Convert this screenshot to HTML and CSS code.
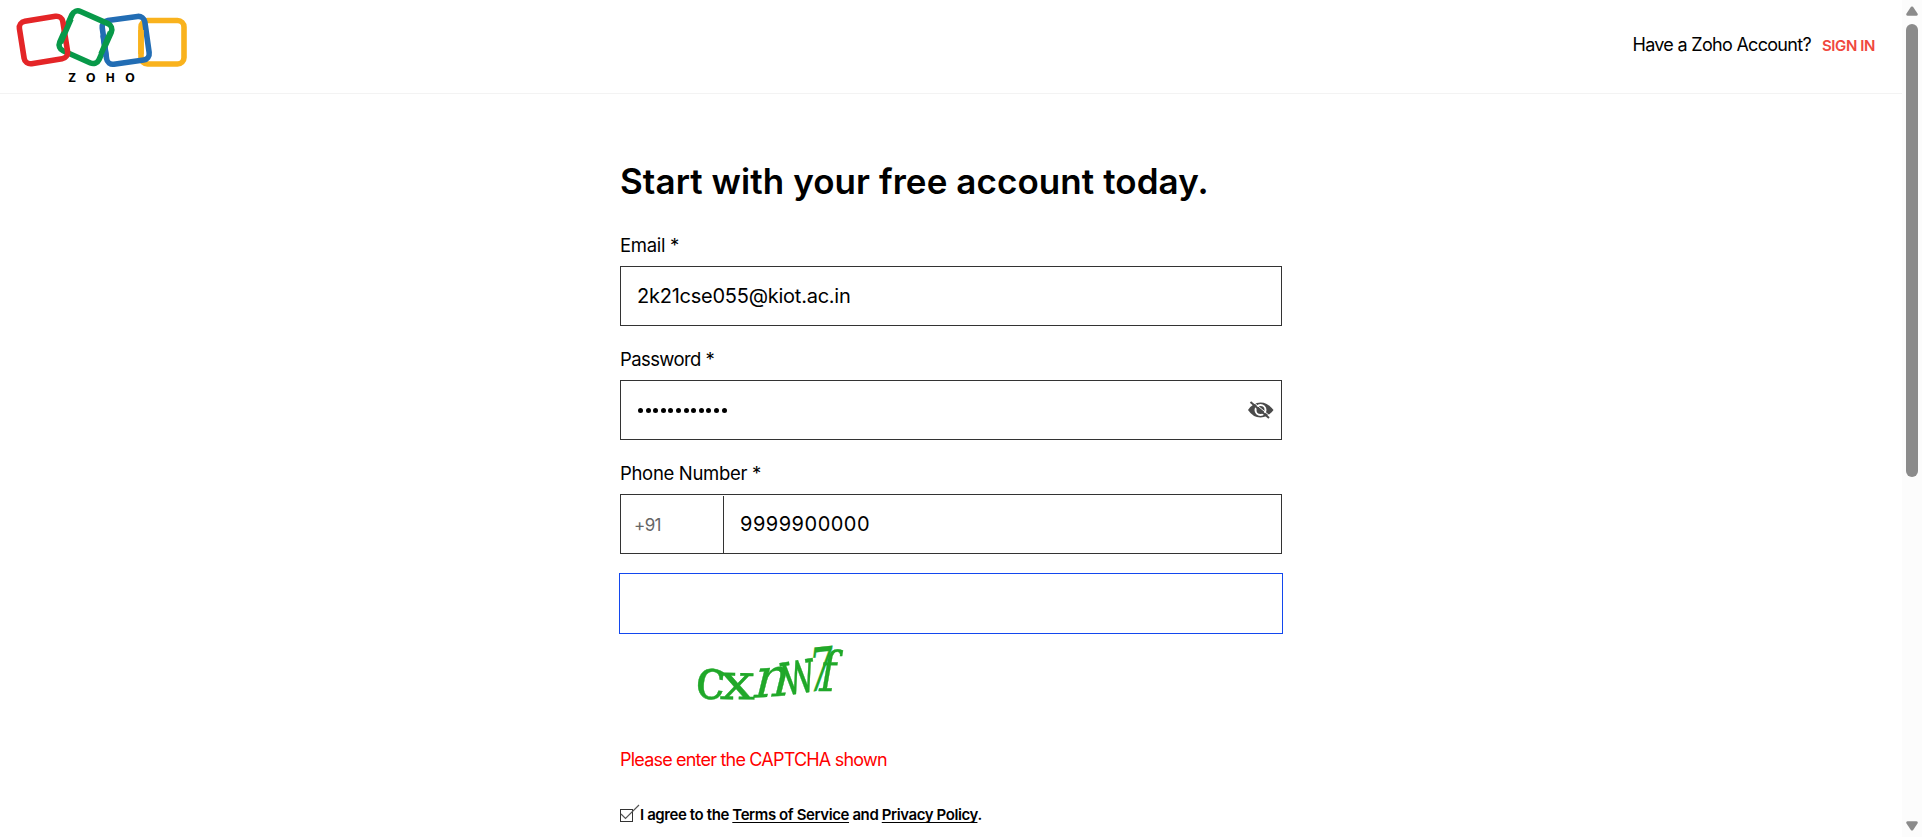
FILE: index.html
```html
<!DOCTYPE html>
<html lang="en">
<head>
<meta charset="utf-8">
<title>Zoho Sign Up</title>
<link rel="stylesheet" href="styles.css">
</head>
<body>
<div class="page">
  <header class="header">
    <svg class="logo" width="170" height="70" viewBox="17 8 170 70" fill="none" stroke-width="5.6">
      <rect x="-21.500" y="-21.500" width="43" height="43.500" rx="6.500" stroke="#f9b21d" transform="translate(162.500 42)"/>
      <rect x="-21.500" y="-22" width="43" height="44" rx="6.500" stroke="#226db4" transform="translate(125.700 40.300) rotate(-8)"/>
      <path stroke="#f9b21d" d="M141 30V54"/>
      <rect x="-21.500" y="-21.500" width="43" height="43" rx="6.500" stroke="#089949" transform="translate(85.500 37.200) rotate(24)"/>
      <path stroke="#226db4" d="M103 35L106 56"/>
      <path stroke="#089949" d="M110.500 32L101 54"/>
      <rect x="-22" y="-21.500" width="44" height="43" rx="6.500" stroke="#e42527" transform="translate(43.500 40) rotate(-9)"/>
      <path stroke="#089949" d="M71 19L60.500 43"/>
      <text class="logo-text" x="68.500" y="81.500">ZOHO</text>
    </svg>
    <div class="account"><span class="ask">Have a Zoho Account?</span><a class="signin">SIGN IN</a></div>
  </header>
  <main class="form">
    <h1 class="title">Start with your free account today.</h1>
    <label class="label">Email *</label>
    <div class="field"><span class="value email">2k21cse055@kiot.ac.in</span></div>
    <label class="label password-label">Password *</label>
    <div class="field">
      <div class="dots"><i></i><i></i><i></i><i></i><i></i><i></i><i></i><i></i><i></i><i></i><i></i><i></i></div>
      <svg class="eye" width="28" height="20" viewBox="0 0 28 20">
        <path fill="#4a4a4a" d="M1 10Q6 2.500 13.500 2.500T26.500 10Q21 17.500 13.500 17.500T1 10Z"/>
        <circle cx="13.500" cy="10" r="5" fill="none" stroke="#fff" stroke-width="2"/>
        <path d="M5 1L23.500 16.500" stroke="#fff" stroke-width="1"/>
        <path d="M3.500 2L22 18" stroke="#4a4a4a" stroke-width="2"/>
      </svg>
    </div>
    <label class="label">Phone Number *</label>
    <div class="field phone"><div class="code">+91</div><span class="value number">9999900000</span></div>
    <div class="field captcha-input"></div>
    <svg class="captcha" width="300" height="90" viewBox="620 634 300 90">
      <g class="captcha-text">
        <text transform="translate(694 697) rotate(6) scale(1.220 1.280)">c</text>
        <text transform="translate(719 699) rotate(1) scale(1.450 1.150)">x</text>
        <text transform="translate(751 698) rotate(-4) skewX(-18) scale(1.250 1.250)">n</text>
        <text transform="translate(784 696) rotate(-9) scale(.92 1.450)">w</text>
        <text transform="translate(806 692) rotate(-6) skewX(-13) scale(.85 1.350)">7</text>
        <text transform="translate(817 691) skewX(-10) scale(1 1.250)">f</text>
      </g>
    </svg>
    <p class="error">Please enter the CAPTCHA shown</p>
    <div class="terms">
      <svg class="check" width="20" height="19" viewBox="0 0 20 19" fill="none">
        <rect x=".5" y="5.500" width="12" height="12" stroke="#333"/>
        <path d="M1 10L5.500 14.500L19 1" stroke="#555" stroke-width="1.200"/>
      </svg>
      <span class="agree">I agree to the <u>Terms of Service</u> and <u>Privacy Policy</u>.</span>
    </div>
  </main>
</div>
<div class="scrollbar">
  <svg width="12" height="10" viewBox="0 0 12 10"><path fill="#8b8b8b" d="M5 .8Q6 0 7 .8L11.800 8Q12 9.700 10.500 9.700H1.500Q0 9.700 .2 8Z"/></svg>
  <div class="thumb"></div>
  <svg class="down" width="12" height="10" viewBox="0 0 12 10"><path fill="#8b8b8b" d="M5 9.200Q6 10 7 9.200L11.800 2Q12 .3 10.500 .3H1.500Q0 .3 .2 2Z"/></svg>
</div>
</body>
</html>
```

FILE: styles.css
```css
* { box-sizing: border-box; }
body { margin: 0; height: 837px; overflow: hidden; display: flex; background: #fff; color: #000; font-family: Inter, "Liberation Sans", sans-serif; }
.page { flex: 1; height: 837px; overflow: hidden; }
.header { height: 94px; border-bottom: 1px solid #f3f3f3; display: flex; justify-content: space-between; padding: 8px 27px 0 17px; }
.logo { overflow: visible; }
.logo-text { font: 700 12.500px "Open Sans", sans-serif; letter-spacing: 9.900px; fill: #000; stroke: none; }
.account { display: flex; height: 74px; align-items: baseline; padding-top: 26px; }
.ask { font-size: 18px; line-height: 22px; letter-spacing: -.7px; }
.signin { font-size: 15px; font-weight: 600; letter-spacing: -.4px; color: #f0483e; margin-left: 11px; }
.form { width: 664px; margin-left: 619px; padding: 0 1px; }
.title { margin: 64px 0 0; height: 46px; line-height: 47px; font-size: 35px; font-weight: 600; letter-spacing: .08px; }
.label { display: block; height: 54px; padding-top: 20px; line-height: 26px; font-size: 18.500px; letter-spacing: -.32px; }
.password-label { letter-spacing: -.6px; }
.title + .label { height: 62px; padding-top: 28px; }
.field { height: 60px; border: 1px solid #333; display: flex; align-items: center; padding: 0 6px 0 16px; }
.value { font-size: 20px; }
.email { letter-spacing: -.24px; }
.dots { display: flex; gap: 2.600px; padding-left: 1px; }
.dots i { width: 5px; height: 5px; border-radius: 50%; background: #000; }
.eye { margin-left: auto; }
.phone { padding-left: 0; }
.code { width: 103px; height: 57px; margin-top: 1px; border-right: 1px solid #333; padding-left: 13px; line-height: 58px; font-size: 17px; letter-spacing: -.6px; color: #666; }
.number { margin-left: 16px; letter-spacing: .5px; }
.captcha-input { width: 664px; height: 61px; margin: 19px -1px 0; border-color: #1348ee; }
.captcha { display: block; }
.captcha-text { font: 44px "DejaVu Serif", serif; fill: #20a829; stroke: #20a829; stroke-width: .3px; }
.error { margin: 23px 0 0; height: 26px; line-height: 26px; font-size: 18px; letter-spacing: -.8px; color: #f00; }
.terms { display: flex; height: 26px; margin-top: 29px; }
.check { margin-top: 2px; }
.agree { font-size: 15px; font-weight: 600; line-height: 26px; letter-spacing: -.4px; }
.agree u { text-underline-offset: 2px; text-decoration-thickness: 1px; text-decoration-skip-ink: none; }
.scrollbar { width: 20px; height: 837px; background: #fcfcfc; display: flex; flex-direction: column; align-items: center; padding: 6px 0; }
.thumb { width: 12px; height: 453px; margin-top: 8px; border-radius: 6px; background: #8b8b8b; }
.down { margin-top: auto; }
```
